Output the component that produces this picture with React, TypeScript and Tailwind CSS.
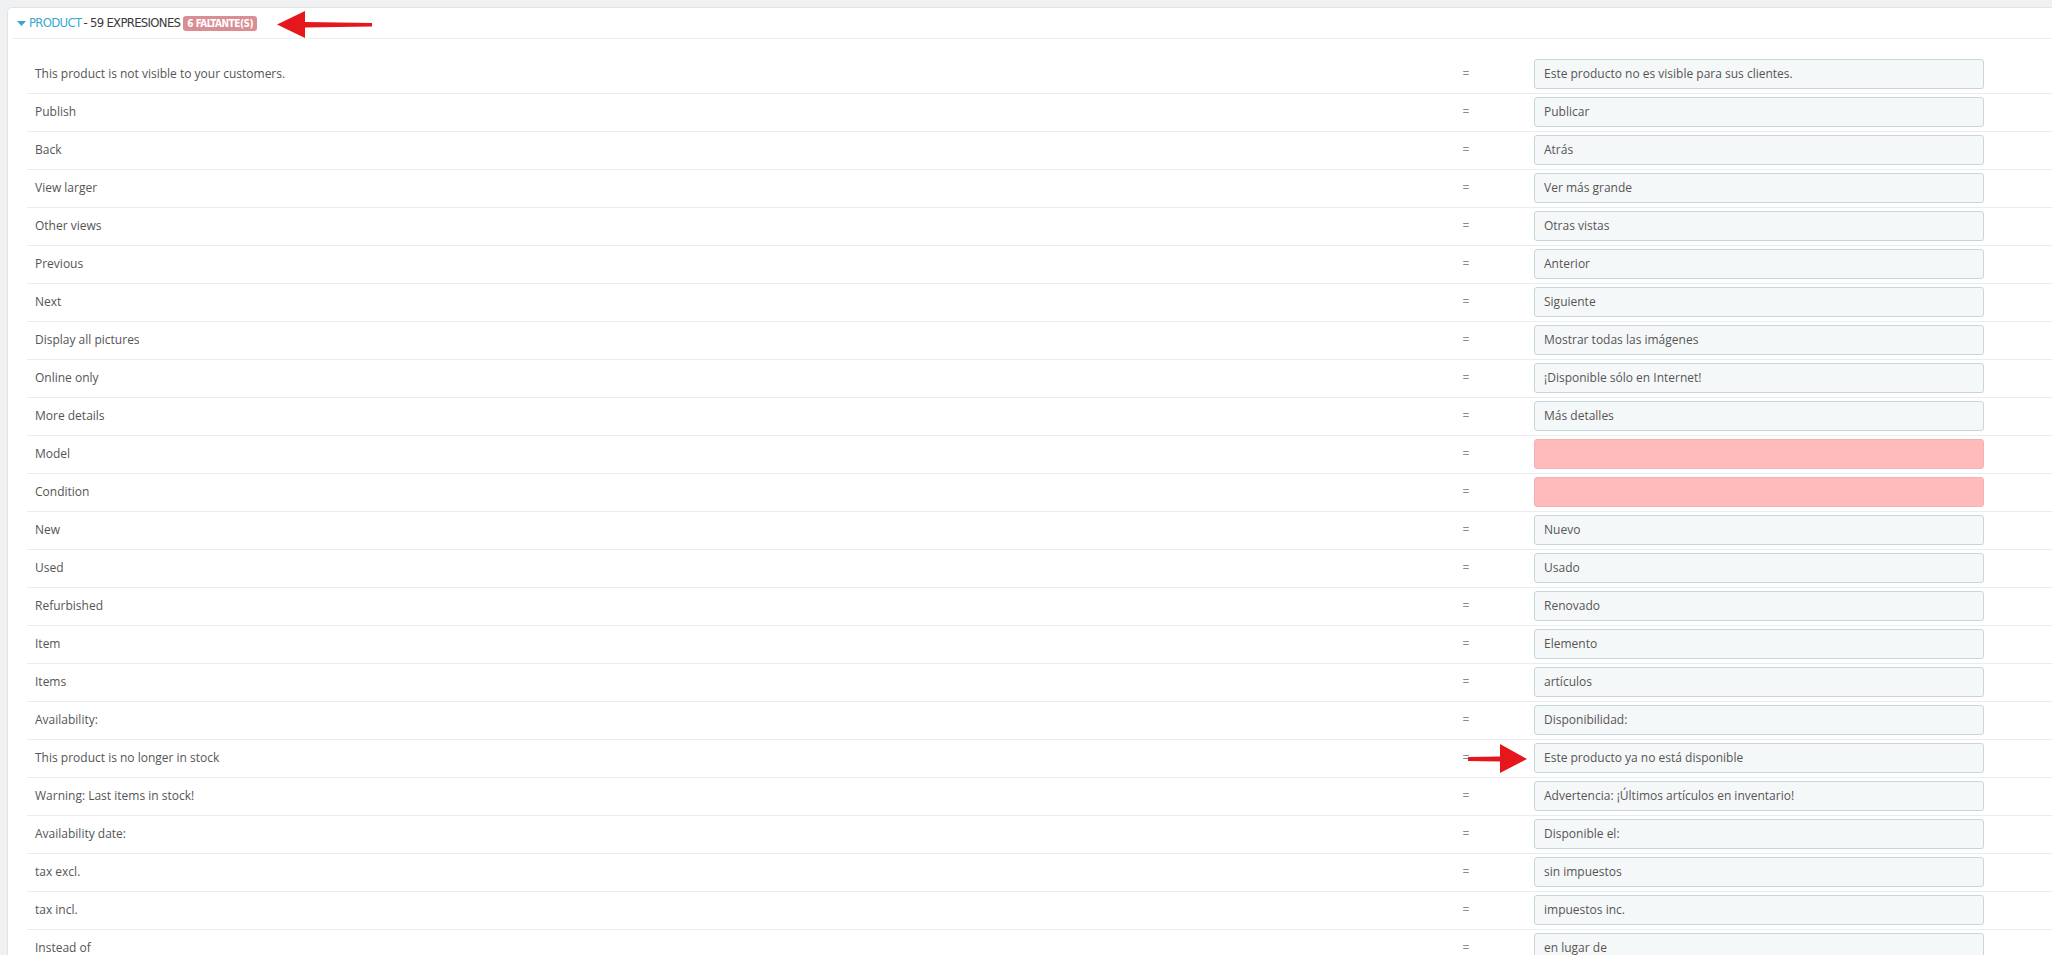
import React from "react";

type Row = { src: string; tr: string | null; arrow?: boolean };

const rows: Row[] = [
  { src: "This product is not visible to your customers.", tr: "Este producto no es visible para sus clientes." },
  { src: "Publish", tr: "Publicar" },
  { src: "Back", tr: "Atrás" },
  { src: "View larger", tr: "Ver más grande" },
  { src: "Other views", tr: "Otras vistas" },
  { src: "Previous", tr: "Anterior" },
  { src: "Next", tr: "Siguiente" },
  { src: "Display all pictures", tr: "Mostrar todas las imágenes" },
  { src: "Online only", tr: "¡Disponible sólo en Internet!" },
  { src: "More details", tr: "Más detalles" },
  { src: "Model", tr: null },
  { src: "Condition", tr: null },
  { src: "New", tr: "Nuevo" },
  { src: "Used", tr: "Usado" },
  { src: "Refurbished", tr: "Renovado" },
  { src: "Item", tr: "Elemento" },
  { src: "Items", tr: "artículos" },
  { src: "Availability:", tr: "Disponibilidad:" },
  { src: "This product is no longer in stock", tr: "Este producto ya no está disponible", arrow: true },
  { src: "Warning: Last items in stock!", tr: "Advertencia: ¡Últimos artículos en inventario!" },
  { src: "Availability date:", tr: "Disponible el:" },
  { src: "tax excl.", tr: "sin impuestos" },
  { src: "tax incl.", tr: "impuestos inc." },
  { src: "Instead of", tr: "en lugar de" },
];

const condensed = { fontFamily: '"Liberation Sans Narrow", "DejaVu Sans Condensed", "Liberation Sans", sans-serif' };

export default function App() {
  return (
    <div className="w-[2052px] h-[955px] overflow-hidden bg-[#eff1f2] pt-[7px] pl-[7px]" style={{ fontFamily: '"Open Sans", "Liberation Sans", sans-serif' }}>
      <div className="w-[2060px] bg-white border border-[#e3e3e3] rounded-[5px]">
        {/* Heading */}
        <div className="mx-[4px] h-[31px] border-b border-[#eeeeee] flex items-center pl-[5px]">
          <svg width="9" height="6" viewBox="0 0 9 6" className="mr-[3px] mt-[1px]">
            <polygon points="0,0 9,0 4.5,5" fill="#33a9cf" />
          </svg>
          <span className="text-[13px] uppercase text-[#3aa9cf] tracking-[-0.7px]" style={condensed}>Product</span>
          <span className="text-[13px] uppercase text-[#3a3a3a] tracking-[-0.7px] ml-[2px]" style={condensed}>- 59 expresiones</span>
          <span
            className="ml-[3px] h-[15px] px-[4px] flex items-center rounded-[3px] bg-[#d98e93] text-white text-[10px] font-bold uppercase tracking-[-0.5px]"
            style={condensed}
          >
            6 faltante(s)
          </span>
          <svg width="96" height="28" viewBox="0 0 96 28" className="ml-[20px] mt-[3px]">
            <polygon points="0,13.5 28,0 28,11 95,12 95,15.5 28,16.5 28,27" fill="#e5161c" />
          </svg>
        </div>
        {/* Body */}
        <div className="pt-[17px] pl-[19px]">
          {rows.map((r, i) => (
            <div key={i} className="relative flex items-start pt-[3px] h-[38px] border-b border-[#eaedef]">
              <div className="w-[1427px] h-[30px] pl-[8px] flex items-center text-[12px] text-[#555]">{r.src}</div>
              <div className="w-[24px] h-[30px] flex items-center justify-center text-[12px] text-[#8a8a8a]">=</div>
              <div className="w-[56px]" />
              {r.tr !== null ? (
                <div className="w-[450px] h-[30px] rounded-[3px] border border-[#c7d6db] bg-[#f5f8f9] pl-[9px] flex items-center text-[12px] text-[#555]">
                  {r.tr}
                </div>
              ) : (
                <div className="w-[450px] h-[30px] rounded-[3px] border border-[#f4b1b3] bg-[#ffbabb]" />
              )}
              {r.arrow && (
                <svg width="60" height="30" viewBox="0 0 60 30" className="absolute left-[1441px] top-[4px]">
                  <polygon points="0,13 32,12.5 32,0 59,15 32,29 32,17.5 0,17" fill="#e5161c" />
                </svg>
              )}
            </div>
          ))}
        </div>
      </div>
    </div>
  );
}
